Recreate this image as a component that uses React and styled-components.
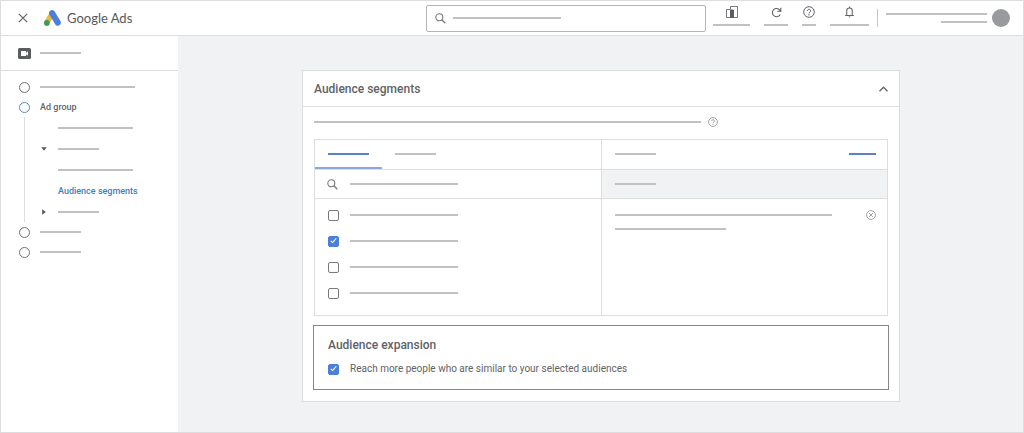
import React, { useState } from "react";
import styled, { createGlobalStyle, css } from "styled-components";

const GlobalStyle = createGlobalStyle`
  *, *::before, *::after {
    box-sizing: border-box;
  }

  body {
    margin: 0;
    background: #f0f2f3;
    color: #5f6368;
    font-family: Roboto, "Liberation Sans", sans-serif;
    font-size: 10px;
    line-height: 16px;
  }

  ul {
    margin: 0;
    padding: 0;
    list-style: none;
  }

  svg {
    display: block;
    flex: none;
  }
`;

/* ---------- shared parts ---------- */

const Bar = styled.span`
  display: block;
  flex: 0 1 auto;
  width: ${(p) => p.$w}px;
  max-width: 100%;
  height: 2px;
  background: ${(p) => (p.$blue ? "#5a82c4" : "#c0c1c1")};
`;

const plainButton = css`
  display: flex;
  align-items: center;
  padding: 0;
  border: 0;
  background: none;
  color: inherit;
  font: inherit;
  cursor: pointer;
`;

const IconButton = styled.button`
  ${plainButton}
`;

const CheckInput = styled.input`
  appearance: none;
  display: grid;
  place-items: center;
  flex: none;
  width: 11px;
  height: 11px;
  margin: 0;
  border: 1px solid #77797c;
  border-radius: 2px;
  background: #fff;
  cursor: pointer;

  &:checked {
    border-color: #4a7fdc;
    background: #4a7fdc;
  }

  &:checked::after {
    content: "";
    width: 3px;
    height: 6px;
    margin-bottom: 2px;
    border: solid #fff;
    border-width: 0 1px 1px 0;
    transform: rotate(42deg);
  }
`;

const BarInput = styled.input`
  flex: 1;
  min-width: 0;
  height: 20px;
  padding: 0;
  border: 0;
  outline: none;
  color: inherit;
  font: inherit;
  background: linear-gradient(#c0c1c1, #c0c1c1) no-repeat 0 center / 108px 2px;

  &:focus {
    background: none;
  }
`;

/* ---------- icons ---------- */

const SearchIcon = () => (
  <svg width="11" height="11" viewBox="0 0 11 11" fill="none" stroke="#77797c">
    <circle cx="4.3" cy="4.3" r="3.5" strokeWidth="1.1" />
    <path d="M6.8 6.8 10.300 10.300" strokeWidth="1.3" />
  </svg>
);

const CloseIcon = () => (
  <svg width="10" height="10" viewBox="0 0 10 10" stroke="#606367" strokeWidth="1.2">
    <path d="M.8.8 9.2 9.2M9.2.8.8 9.2" />
  </svg>
);

const AdsLogo = () => (
  <svg width="17" height="16" viewBox="0 0 50 47" strokeLinecap="round">
    <path d="M24 10 9 36" stroke="#e9b93f" strokeWidth="16" />
    <path d="M24 9.500 40.500 37" stroke="#4a7fdc" strokeWidth="18" />
    <circle cx="8.500" cy="38" r="8.500" fill="#3f9b50" />
  </svg>
);

const VideoIcon = () => (
  <svg width="13" height="11" viewBox="0 0 13 11">
    <rect width="13" height="11" rx="1.500" fill="#5a5c5f" />
    <path d="M3 3h5v1.700L10 3.200v4.600L8 6.300V8H3z" fill="#fff" />
  </svg>
);

const ReportsIcon = () => (
  <svg width="12" height="12" viewBox="0 0 12 12" fill="none" stroke="#77797c">
    <path d="M4.500 3.500v-3h7v11h-11v-8h4" />
    <path d="M4.500 4h3v7.500h-3z" fill="#5a5c5f" stroke="#5a5c5f" />
  </svg>
);

const RefreshIcon = () => (
  <svg width="11" height="11" viewBox="0 0 11 11" fill="none" stroke="#5f6265" strokeWidth="1.1">
    <path d="M9.200 7.400A4.100 4.100 0 1 1 8.800 3.100L9.800 4.300" />
    <path d="M9.800.8v3.500H6.300" />
  </svg>
);

const HelpIcon = ({ size = 12, color = "#606367" }) => (
  <svg width={size} height={size} viewBox="0 0 12 12" fill="none" stroke={color}>
    <circle cx="6" cy="6" r="5.300" strokeWidth="1" />
    <path d="M4.400 4.900a1.600 1.600 0 1 1 2.500 1.300c-.6.4-.9.7-.9 1.300" strokeWidth="1" />
    <path d="M6 8.300v1.100" strokeWidth="1.100" />
  </svg>
);

const BellIcon = () => (
  <svg width="11" height="12" viewBox="0 0 11 13" fill="none" stroke="#606367" strokeWidth="1.1">
    <path d="M2.500 10V5.200a3 3 0 0 1 6 0V10" />
    <path d="M.8 10.300h9.400M5.500 2.200V.5" />
    <path d="M4.300 11.500h2.400L5.500 12.600z" fill="#606367" stroke="none" />
  </svg>
);

const ChevronUpIcon = () => (
  <svg width="9" height="6" viewBox="0 0 9 6" fill="none" stroke="#606367" strokeWidth="1.3">
    <path d="M.5 5.300 4.500 1.200l4 4.100" />
  </svg>
);

const RemoveIcon = () => (
  <svg width="10" height="10" viewBox="0 0 10 10" fill="none" stroke="#a3a5a7">
    <circle cx="5" cy="5" r="4.400" />
    <path d="M3.200 3.200l3.600 3.600M6.800 3.200 3.200 6.800" />
  </svg>
);

const ArrowIcon = ({ open }) => (
  <svg width="6" height="6" viewBox="0 0 6 6" fill="#55575a">
    <path d={open ? "M.3 1.200h5.400L3 4.800z" : "M1.200.3v5.400L4.800 3z"} />
  </svg>
);

/* ---------- layout ---------- */

const Page = styled.div`
  display: flex;
  flex-direction: column;
  min-height: 100vh;
  border: 1px solid #dcdddf;
`;

const Header = styled.header`
  display: flex;
  align-items: center;
  height: 35px;
  padding: 0 13px 0 17px;
  border-bottom: 1px solid #dcdddf;
  background: #fff;
`;

const Brand = styled.a`
  display: flex;
  align-items: center;
  gap: 6px;
  margin-left: 16px;
  color: #55595e;
  font-family: Lato, Roboto, sans-serif;
  font-size: 13px;
  white-space: nowrap;
  text-decoration: none;
`;

const HeaderRight = styled.div`
  display: flex;
  align-items: center;
  flex: none;
  margin-left: auto;
`;

const SearchBox = styled.label`
  display: flex;
  align-items: center;
  gap: 7px;
  width: 280px;
  height: 27px;
  padding: 0 8px;
  border: 1px solid #b4b5b6;
  border-radius: 2px;
`;

const Tools = styled.nav`
  display: flex;
  gap: 14px;
  margin: 0 8px 4px 7px;
`;

const Tool = styled.button`
  ${plainButton}
  display: grid;
  grid-template-rows: 12px 2px;
  place-items: center;
  gap: 6px;
`;

const Account = styled.button`
  ${plainButton}
  gap: 5px;
  height: 18px;
  padding-left: 8px;
  border-left: 1px solid #c4c6c8;
`;

const AccountText = styled.span`
  display: flex;
  flex-direction: column;
  align-items: flex-end;
  gap: 6px;
`;

const Avatar = styled.span`
  width: 18px;
  height: 18px;
  border-radius: 50%;
  background: #999a9e;
`;

const Body = styled.div`
  display: flex;
  flex: 1;
`;

const Sidebar = styled.aside`
  flex: none;
  width: 177px;
  background: #fff;
`;

const Campaign = styled.div`
  display: flex;
  align-items: center;
  gap: 9px;
  height: 35px;
  padding-left: 17px;
  border-bottom: 1px solid #dcdddf;
`;

const Steps = styled.ul`
  padding: 6px 0 0 18px;
`;

const StepLink = styled.a`
  display: flex;
  align-items: center;
  gap: 10px;
  height: 20px;
  color: #5f6368;
  font-size: 9px;
  font-weight: 500;
  text-decoration: none;
`;

const Ring = styled.span`
  width: 11px;
  height: 11px;
  border: 1px solid ${(p) => (p.$active ? "#5d86b8" : "#707376")};
  border-radius: 50%;
`;

const SubSteps = styled.ul`
  margin-left: 5px;
  border-left: 1px solid #dcdddf;
`;

const SubLink = styled.a`
  display: grid;
  grid-template-columns: 6px 1fr;
  align-items: center;
  gap: 11px;
  height: 21px;
  padding-left: 16px;
  color: #3f7fbd;
  font-size: 9px;
  font-weight: 500;
  text-decoration: none;
`;

const Main = styled.main`
  flex: 1;
  min-width: 0;
  padding: 34px 123px 30px 124px;
`;

const Card = styled.section`
  padding-bottom: 11px;
  border: 1px solid #dcdddf;
  background: #fff;
`;

const CardHeader = styled.div`
  display: flex;
  align-items: center;
  justify-content: space-between;
  height: 36px;
  padding: 0 11px;
  border-bottom: 1px solid #dcdddf;
`;

const Title = styled.h2`
  margin: 0;
  font-size: 12px;
  font-weight: 500;
  line-height: 16px;
`;

const Description = styled.div`
  display: flex;
  align-items: center;
  gap: 7px;
  height: 32px;
  padding: 0 11px 2px;
`;

const Picker = styled.div`
  display: grid;
  grid-template-columns: 1fr 1fr;
  margin: 0 11px;
  border: 1px solid #dcdddf;
`;

const Column = styled.div`
  & + & {
    border-left: 1px solid #dcdddf;
  }
`;

const Tabs = styled.div`
  display: flex;
  height: 30px;
  border-bottom: 1px solid #dcdddf;
`;

const Tab = styled.button`
  ${plainButton}
  padding: 0 13px;
  border-bottom: 2px solid ${(p) => (p.$active ? "#8ea9d8" : "transparent")};
`;

const FilterRow = styled.label`
  display: flex;
  align-items: center;
  gap: 12px;
  height: 29px;
  padding: 0 12px;
  border-bottom: 1px solid #dcdddf;
`;

const Options = styled.ul`
  padding: 3px 0 9px 13px;
`;

const Option = styled.label`
  display: flex;
  align-items: center;
  gap: 11px;
  height: 26px;
`;

const SelectedRow = styled.div`
  display: flex;
  align-items: center;
  justify-content: space-between;
  height: ${(p) => (p.$group ? 29 : 30)}px;
  padding: ${(p) => (p.$group ? "0 11px 0 13px" : "0 11px 2px 13px")};
  border-bottom: 1px solid #dcdddf;
  background: ${(p) => (p.$group ? "#f1f2f4" : "none")};
`;

const SelectedItem = styled.div`
  display: flex;
  align-items: flex-start;
  justify-content: space-between;
  gap: 12px;
  padding: 11px 11px 0 13px;
`;

const SelectedText = styled.div`
  display: grid;
  gap: 12px;
  padding-top: 4px;
`;

const Expansion = styled.section`
  margin: 9px 10px 0;
  padding: 11px 14px 12px;
  border: 1px solid #858789;
`;

const ExpansionOption = styled(Option)`
  height: 16px;
  margin-top: 8px;
`;

/* ---------- data ---------- */

const tools = [
  { label: "Reports", width: 37, Icon: ReportsIcon },
  { label: "Refresh", width: 24, Icon: RefreshIcon },
  { label: "Help", width: 14, Icon: HelpIcon },
  { label: "Notifications", width: 39, Icon: BellIcon },
];

const subSteps = [
  { width: 75 },
  { width: 41, arrow: true, open: true },
  { width: 75 },
  { text: "Audience segments" },
  { width: 41, arrow: true },
];

const Step = ({ width, text, label }) => (
  <StepLink href="#" aria-label={label}>
    <Ring $active={Boolean(text)} />
    {text || <Bar $w={width} />}
  </StepLink>
);

const App = () => {
  const [checked, setChecked] = useState([false, true, false, false]);
  const [tab, setTab] = useState(0);
  const [expand, setExpand] = useState(true);

  const toggle = (index) =>
    setChecked(checked.map((value, i) => (i === index ? !value : value)));

  return (
    <>
      <GlobalStyle />
      <Page>
        <Header>
          <IconButton type="button" aria-label="Close">
            <CloseIcon />
          </IconButton>
          <Brand href="#">
            <AdsLogo />
            <span>Google Ads</span>
          </Brand>
          <HeaderRight>
            <SearchBox>
              <SearchIcon />
              <BarInput type="text" aria-label="Search" />
            </SearchBox>
            <Tools>
              {tools.map(({ label, width, Icon }) => (
                <Tool key={label} type="button" aria-label={label}>
                  <Icon />
                  <Bar $w={width} />
                </Tool>
              ))}
            </Tools>
            <Account type="button" aria-label="Account">
              <AccountText>
                <Bar $w={101} />
                <Bar $w={46} />
              </AccountText>
              <Avatar />
            </Account>
          </HeaderRight>
        </Header>

        <Body>
          <Sidebar>
            <Campaign>
              <VideoIcon />
              <Bar $w={41} />
            </Campaign>
            <Steps>
              <li>
                <Step width={95} label="Campaign" />
              </li>
              <li>
                <Step text="Ad group" />
                <SubSteps>
                  {subSteps.map(({ width, text, arrow, open }, i) => (
                    <li key={i}>
                      <SubLink href="#" aria-label={text || `Section ${i + 1}`}>
                        <span>{arrow && <ArrowIcon open={open} />}</span>
                        {text || <Bar $w={width} />}
                      </SubLink>
                    </li>
                  ))}
                </SubSteps>
              </li>
              <li>
                <Step width={41} label="Ad" />
              </li>
              <li>
                <Step width={41} label="Review" />
              </li>
            </Steps>
          </Sidebar>

          <Main>
            <Card>
              <CardHeader>
                <Title>Audience segments</Title>
                <IconButton type="button" aria-label="Collapse">
                  <ChevronUpIcon />
                </IconButton>
              </CardHeader>
              <Description>
                <Bar $w={387} />
                <IconButton type="button" aria-label="About audience segments">
                  <HelpIcon size={10} color="#8b8e91" />
                </IconButton>
              </Description>

              <Picker>
                <Column>
                  <Tabs role="tablist">
                    {["Search", "Browse"].map((name, i) => (
                      <Tab
                        key={name}
                        type="button"
                        role="tab"
                        aria-label={name}
                        aria-selected={tab === i}
                        $active={tab === i}
                        onClick={() => setTab(i)}
                      >
                        <Bar $w={41} $blue={tab === i} />
                      </Tab>
                    ))}
                  </Tabs>
                  <FilterRow>
                    <SearchIcon />
                    <BarInput type="text" aria-label="Search segments" />
                  </FilterRow>
                  <Options>
                    {checked.map((value, i) => (
                      <li key={i}>
                        <Option>
                          <CheckInput
                            type="checkbox"
                            aria-label={`Segment ${i + 1}`}
                            checked={value}
                            onChange={() => toggle(i)}
                          />
                          <Bar $w={108} />
                        </Option>
                      </li>
                    ))}
                  </Options>
                </Column>
                <Column>
                  <SelectedRow>
                    <Bar $w={41} />
                    <IconButton type="button" aria-label="Clear all">
                      <Bar $w={27} $blue />
                    </IconButton>
                  </SelectedRow>
                  <SelectedRow $group>
                    <Bar $w={41} />
                  </SelectedRow>
                  <SelectedItem>
                    <SelectedText>
                      <Bar $w={217} />
                      <Bar $w={111} />
                    </SelectedText>
                    <IconButton type="button" aria-label="Remove">
                      <RemoveIcon />
                    </IconButton>
                  </SelectedItem>
                </Column>
              </Picker>

              <Expansion>
                <Title>Audience expansion</Title>
                <ExpansionOption>
                  <CheckInput
                    type="checkbox"
                    checked={expand}
                    onChange={(e) => setExpand(e.target.checked)}
                  />
                  Reach more people who are similar to your selected audiences
                </ExpansionOption>
              </Expansion>
            </Card>
          </Main>
        </Body>
      </Page>
    </>
  );
};

export default App;
